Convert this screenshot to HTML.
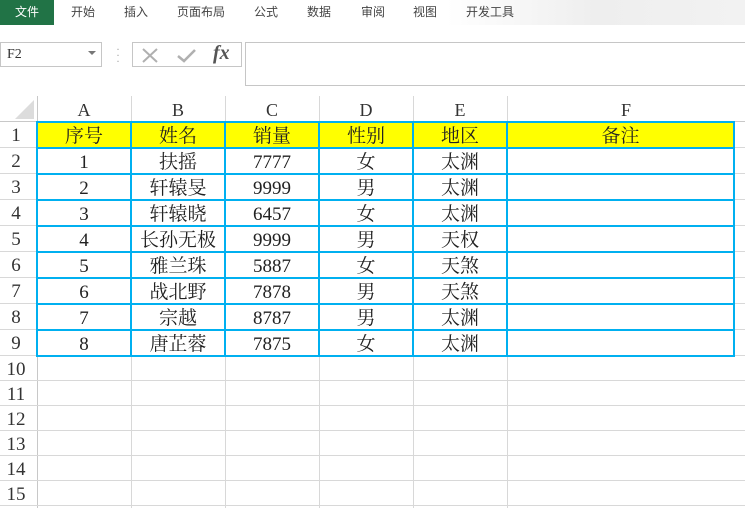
<!DOCTYPE html>
<html><head><meta charset="utf-8"><style>
*{margin:0;padding:0;box-sizing:border-box}
body{width:745px;height:508px;overflow:hidden;background:#fff;position:relative;font-family:"Liberation Serif","Noto Serif CJK SC",serif}
.a{position:absolute}
.tab{position:absolute;top:0;height:25px;line-height:24px;font-family:"Liberation Sans","Noto Sans CJK SC",sans-serif;font-size:12px;color:#444}
.c{position:absolute;text-align:center;font-size:19px;color:#222;line-height:26px}
.h{position:absolute;text-align:center;font-size:18px;color:#333}
</style></head><body>
<div class="a" style="left:0;top:0;width:745px;height:25px;background:linear-gradient(90deg,#fff 0%,#fff 60%,#eee 80%,#f2f2f2 100%)"></div>
<div class="a" style="left:0;top:0;width:54px;height:25px;background:#217346;color:#fff;font-family:'Liberation Sans','Noto Sans CJK SC',sans-serif;font-size:12px;line-height:24px;text-align:center">文件</div>
<div class="tab" style="left:71px">开始</div>
<div class="tab" style="left:124px">插入</div>
<div class="tab" style="left:177px">页面布局</div>
<div class="tab" style="left:254px">公式</div>
<div class="tab" style="left:307px">数据</div>
<div class="tab" style="left:361px">审阅</div>
<div class="tab" style="left:413px">视图</div>
<div class="tab" style="left:466px">开发工具</div>
<div class="a" style="left:0;top:42px;width:102px;height:25px;border:1px solid #c6c6c6;font-size:14px;line-height:23px;padding-left:6px;color:#333">F2</div>
<div class="a" style="left:88px;top:51px;width:0;height:0;border-left:4px solid transparent;border-right:4px solid transparent;border-top:4px solid #777"></div>
<div class="a" style="left:116px;top:46px;color:#aaa;font-size:12px;line-height:6px">·<br>·<br>·</div>
<div class="a" style="left:132px;top:42px;width:110px;height:25px;border:1px solid #c6c6c6"></div>
<svg class="a" style="left:140px;top:46px" width="60" height="18"><path d="M3 3L17 16M17 3L3 16" stroke="#b0b0b0" stroke-width="2"/><path d="M38 10L44 15L55 4" stroke="#b0b0b0" stroke-width="2.5" fill="none"/></svg>
<div class="a" style="left:213px;top:42px;font-style:italic;font-size:20px;color:#555;font-weight:bold">fx</div>
<div class="a" style="left:245px;top:42px;width:510px;height:44px;border:1px solid #c6c6c6"></div>
<div class="a" style="left:0;top:96px;width:745px;height:26px;border-bottom:1px solid #c8c8c8"></div>
<div class="a" style="left:15px;top:100px;width:0;height:0;border-left:19px solid transparent;border-bottom:19px solid #dcdcdc"></div>
<div class="a" style="left:37px;top:96px;width:1px;height:412px;background:#c8c8c8"></div>
<div id="g"></div>
<script>
var cols=[37,131,225,319,413,507,745],L="ABCDEF",h='';
for(var i=0;i<6;i++){h+='<div class="h" style="left:'+cols[i]+'px;top:100px;width:'+(cols[i+1]-cols[i])+'px">'+L[i]+'</div>';
h+='<div class="a" style="left:'+cols[i+1]+'px;top:96px;width:1px;height:412px;background:#d8d8d8"></div>';}
var tops=[122];for(var r=1;r<=15;r++)tops.push(tops[r-1]+(r<=9?26:25));
for(var r=0;r<15;r++){h+='<div class="a" style="left:0;top:'+(tops[r+1]-1)+'px;width:745px;height:1px;background:#d8d8d8"></div>';
h+='<div class="h" style="left:0;top:'+(tops[r]+3)+'px;width:32px;font-size:19px">'+(r+1)+'</div>';}
h+='<div class="a" style="left:38px;top:122px;width:696px;height:26px;background:#ffff00"></div>';
var d=[["序号","姓名","销量","性别","地区","备注"],["1","扶摇","7777","女","太渊"],["2","轩辕旻","9999","男","太渊"],["3","轩辕晓","6457","女","太渊"],["4","长孙无极","9999","男","天权"],["5","雅兰珠","5887","女","天煞"],["6","战北野","7878","男","天煞"],["7","宗越","8787","男","太渊"],["8","唐芷蓉","7875","女","太渊"]];
var cb=[37,131,225,319,413,507,734];
for(var r=0;r<9;r++)for(var c=0;c<d[r].length;c++)h+='<div class="c" style="left:'+cb[c]+'px;top:'+(tops[r]+2)+'px;width:'+(cb[c+1]-cb[c])+'px">'+d[r][c]+'</div>';
for(var r=0;r<=9;r++)h+='<div class="a" style="left:37px;top:'+(tops[r]-1)+'px;width:698px;height:2px;background:#00b0f0"></div>';
for(var c=0;c<7;c++)h+='<div class="a" style="left:'+(cb[c]-1)+'px;top:121px;width:2px;height:236px;background:#00b0f0"></div>';
document.getElementById('g').innerHTML=h;
</script>
</body></html>
